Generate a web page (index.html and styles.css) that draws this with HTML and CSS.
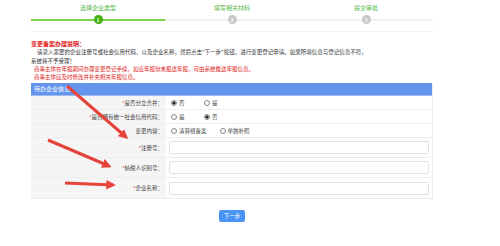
FILE: index.html
```html
<!DOCTYPE html>
<html lang="en">

<head>
    <meta charset="UTF-8">
    <meta name="viewport" content="width=device-width, initial-scale=1.0">
    <title>变更备案</title>
    <link rel="stylesheet" href="styles.css">
</head>

<body>

    <div class="page">
        <div class="steps">
            <div class="step done">
                <div class="step-name">选择企业类型</div>
                <div class="step-num">1</div>
            </div>
            <div class="step">
                <div class="step-name">填写相关材料</div>
                <div class="step-num">2</div>
            </div>
            <div class="step">
                <div class="step-name">提交审批</div>
                <div class="step-num">3</div>
            </div>
        </div>

        <div class="notice">
            <p class="notice-title">变更备案办理说明：</p>
            <p class="indent">请录入需要的企业注册号或社会信用代码，以及企业名称，然后点击"下一步"按钮，进行变更登记申请。如果所填信息与登记信息不符，</p>
            <p class="plain">系统将不予受理！</p>
            <p class="warn">商事主体在年报期间办理变更登记手续，如应年报但未报送年报，可由系统推送年报信息。</p>
            <p class="warn">商事主体应及时修改并补充相关年报信息。</p>
        </div>

        <div class="panel">
            <div class="panel-head">待办企业信息</div>
            <div class="form">
                <div class="row">
                    <div class="label"><i>*</i>是否分立合并：</div>
                    <div class="value">
                        <span class="radio checked">否</span>
                        <span class="radio">是</span>
                    </div>
                </div>
                <div class="row">
                    <div class="label"><i>*</i>是否拥有统一社会信用代码：</div>
                    <div class="value">
                        <span class="radio">是</span>
                        <span class="radio checked">否</span>
                    </div>
                </div>
                <div class="row">
                    <div class="label">变更内容：</div>
                    <div class="value">
                        <span class="radio">清算组备案</span>
                        <span class="radio">单独补照</span>
                    </div>
                </div>
                <div class="row tall">
                    <div class="label"><i>*</i>注册号：</div>
                    <div class="value"><div class="field"></div></div>
                </div>
                <div class="row tall">
                    <div class="label"><i>*</i>纳税人识别号：</div>
                    <div class="value"><div class="field"></div></div>
                </div>
                <div class="row tall">
                    <div class="label"><i>*</i>企业名称：</div>
                    <div class="value"><div class="field"></div></div>
                </div>
            </div>
        </div>

        <div class="actions">
            <button class="btn-next">下一步</button>
        </div>
    </div>

    <!-- red annotation arrows drawn over the screenshot -->
    <svg class="marks" width="500" height="246" viewBox="0 0 500 246">
        <defs>
            <marker id="head" viewBox="0 0 10 10" refX="7" refY="5" markerWidth="3.2" markerHeight="3.2" orient="auto">
                <path d="M0 0 L10 5 L0 10 z" fill="#e6443b"/>
            </marker>
        </defs>
        <line x1="67" y1="86" x2="126" y2="137" stroke="#e6443b" stroke-width="3" marker-end="url(#head)"/>
        <line x1="48" y1="140" x2="109" y2="166" stroke="#e6443b" stroke-width="3" marker-end="url(#head)"/>
        <line x1="65" y1="183" x2="113" y2="185" stroke="#e6443b" stroke-width="3" marker-end="url(#head)"/>
    </svg>

</body>

</html>
```

FILE: styles.css
```css
* {
    box-sizing: border-box;
    margin: 0;
    padding: 0;
}

body {
    background-color: #fff;
    font-family: "Noto Sans CJK SC", "Noto Sans", sans-serif;
    font-size: 5.5px;
    color: #333;
    position: relative;
    width: 500px;
    height: 246px;
    overflow: hidden;
}

.page {
    width: 402px;
    margin-left: 31px;
}

/* steps */
.steps {
    display: grid;
    grid-template-columns: repeat(3, 1fr);
    height: 32px;
    border-bottom: 1px solid #f0f0f0;
}

.step {
    position: relative;
    text-align: center;
}

.step::before {
    content: "";
    position: absolute;
    left: 0;
    right: 0;
    top: 19px;
    height: 2px;
    background-color: #f0f0f0;
}

.step.done::before {
    background-color: #7fd04a;
}

.step-name {
    padding-top: 4px;
    height: 15px;
    line-height: 7px;
    font-size: 6px;
    color: #56b84a;
}

.step-num {
    position: relative;
    width: 9px;
    height: 9px;
    margin: 0 auto;
    border-radius: 50%;
    background-color: #c8c8c8;
    color: #fff;
    font-size: 5px;
    line-height: 9px;
    font-weight: bold;
}

.step.done .step-num {
    background-color: #45b010;
}

/* notice */
.notice {
    padding-top: 8px;
    line-height: 8px;
}

.notice-title {
    color: #e02020;
    font-weight: bold;
    font-size: 6px;
}

.indent {
    padding-left: 6px;
}

.plain {
    margin-top: 1px;
}

.warn {
    color: #e02020;
    padding-left: 3px;
}

/* panel */
.panel {
    margin-top: 2px;
    border-right: 1px solid #eee;
    border-bottom: 1px solid #eee;
}

.panel-head {
    height: 13px;
    line-height: 12px;
    padding-left: 3px;
    background-color: #6495ed;
    border-bottom: 1px solid #9fbcf2;
    color: #fff;
    font-size: 6px;
}

.row {
    display: grid;
    grid-template-columns: 135px 1fr;
    height: 14px;
    border-bottom: 1px solid #eee;
}

.row.tall {
    height: 20px;
}

.row:last-child {
    border-bottom: none;
}

.label {
    display: flex;
    align-items: center;
    justify-content: flex-end;
    padding-right: 3px;
    background-color: #f5f5f5;
    color: #444;
}

.label i {
    font-style: normal;
    color: #e02020;
}

.value {
    display: flex;
    align-items: center;
    padding-left: 5px;
}

.radio {
    display: inline-flex;
    align-items: center;
    gap: 2px;
    min-width: 20px;
    margin-right: 13px;
    color: #444;
}

.radio::before {
    content: "";
    width: 6px;
    height: 6px;
    border: 1px solid #888;
    border-radius: 50%;
    box-sizing: border-box;
}

.radio.checked::before {
    background: radial-gradient(circle, #222 0 1.4px, #fff 1.8px);
}

.field {
    flex: 1;
    height: 13px;
    margin-right: 3px;
    margin-left: -2px;
    border: 1px solid #e2e2e2;
    border-radius: 2px;
    background-color: #fff;
}

/* button */
.actions {
    display: flex;
    justify-content: center;
    padding-top: 11px;
}

.btn-next {
    width: 26px;
    height: 12px;
    border: none;
    border-radius: 2px;
    background-color: #4a94f7;
    color: #fff;
    font-family: inherit;
    font-size: 5.5px;
    cursor: pointer;
}

.marks {
    position: absolute;
    left: 0;
    top: 0;
    pointer-events: none;
}
```
